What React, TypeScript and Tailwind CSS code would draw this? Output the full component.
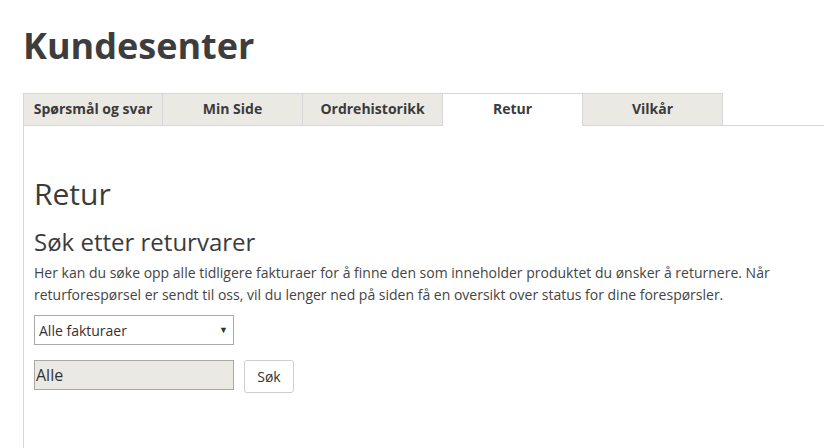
import { useState } from "react";

const tabs = ["Spørsmål og svar", "Min Side", "Ordrehistorikk", "Retur", "Vilkår"];

export default function App() {
  const [active, setActive] = useState("Retur");

  return (
    <div className="min-h-screen bg-white pl-[23px] pt-[22px] text-[#3b3b3b] [font-family:'Open_Sans',sans-serif]">
      <h1 className="text-[36px] font-bold leading-[48px] text-[#3d3d3d]">Kundesenter</h1>

      <div className="mt-[23px] flex">
        {tabs.map((tab) => (
          <button
            key={tab}
            onClick={() => setActive(tab)}
            className={
              tab === active
                ? "h-[33px] w-[140px] border-t border-r border-[#d6d6d6] bg-white pb-[3px] text-[14px] font-bold text-[#3b3b3b] first:border-l"
                : "h-[33px] w-[140px] border-y border-r border-[#d6d6d6] bg-[#ebe9e4] pb-[3px] text-[14px] font-bold text-[#3b3b3b] first:border-l"
            }
          >
            {tab}
          </button>
        ))}
        <div className="flex-1 border-b border-[#d6d6d6]" />
      </div>

      <section className="min-h-[330px] border-l border-[#d6d6d6] pl-[10px] pt-[48px]">
        <h2 className="text-[30px] leading-[40px] text-[#3b3b3b]">Retur</h2>
        <h3 className="mt-[11px] text-[24px] leading-[34px] text-[#3b3b3b]">Søk etter returvarer</h3>
        <p className="mt-[3px] text-[14px] leading-[22px] text-[#444]">
          Her kan du søke opp alle tidligere fakturaer for å finne den som inneholder produktet du ønsker å returnere. Når
          returforespørsel er sendt til oss, vil du lenger ned på siden få en oversikt over status for dine forespørsler.
        </p>

        <div className="mt-[9px] flex h-[30px] w-[200px] items-center justify-between border border-[#a9a9a9] bg-white pl-[4px] pr-[5px] text-[14px] text-[#333]">
          <span>Alle fakturaer</span>
          <span className="text-[9px] text-[#333]">▼</span>
        </div>

        <div className="mt-[15px] flex items-start gap-[10px]">
          <input
            defaultValue="Alle"
            className="h-[30px] w-[200px] border border-[#a9a9a9] bg-[#ebe9e4] px-[1px] text-[16px] text-[#333] outline-none"
          />
          <button className="h-[33px] w-[50px] rounded-[3px] border border-[#cfcfcf] bg-white text-[14px] text-[#333]">
            Søk
          </button>
        </div>
      </section>
    </div>
  );
}
